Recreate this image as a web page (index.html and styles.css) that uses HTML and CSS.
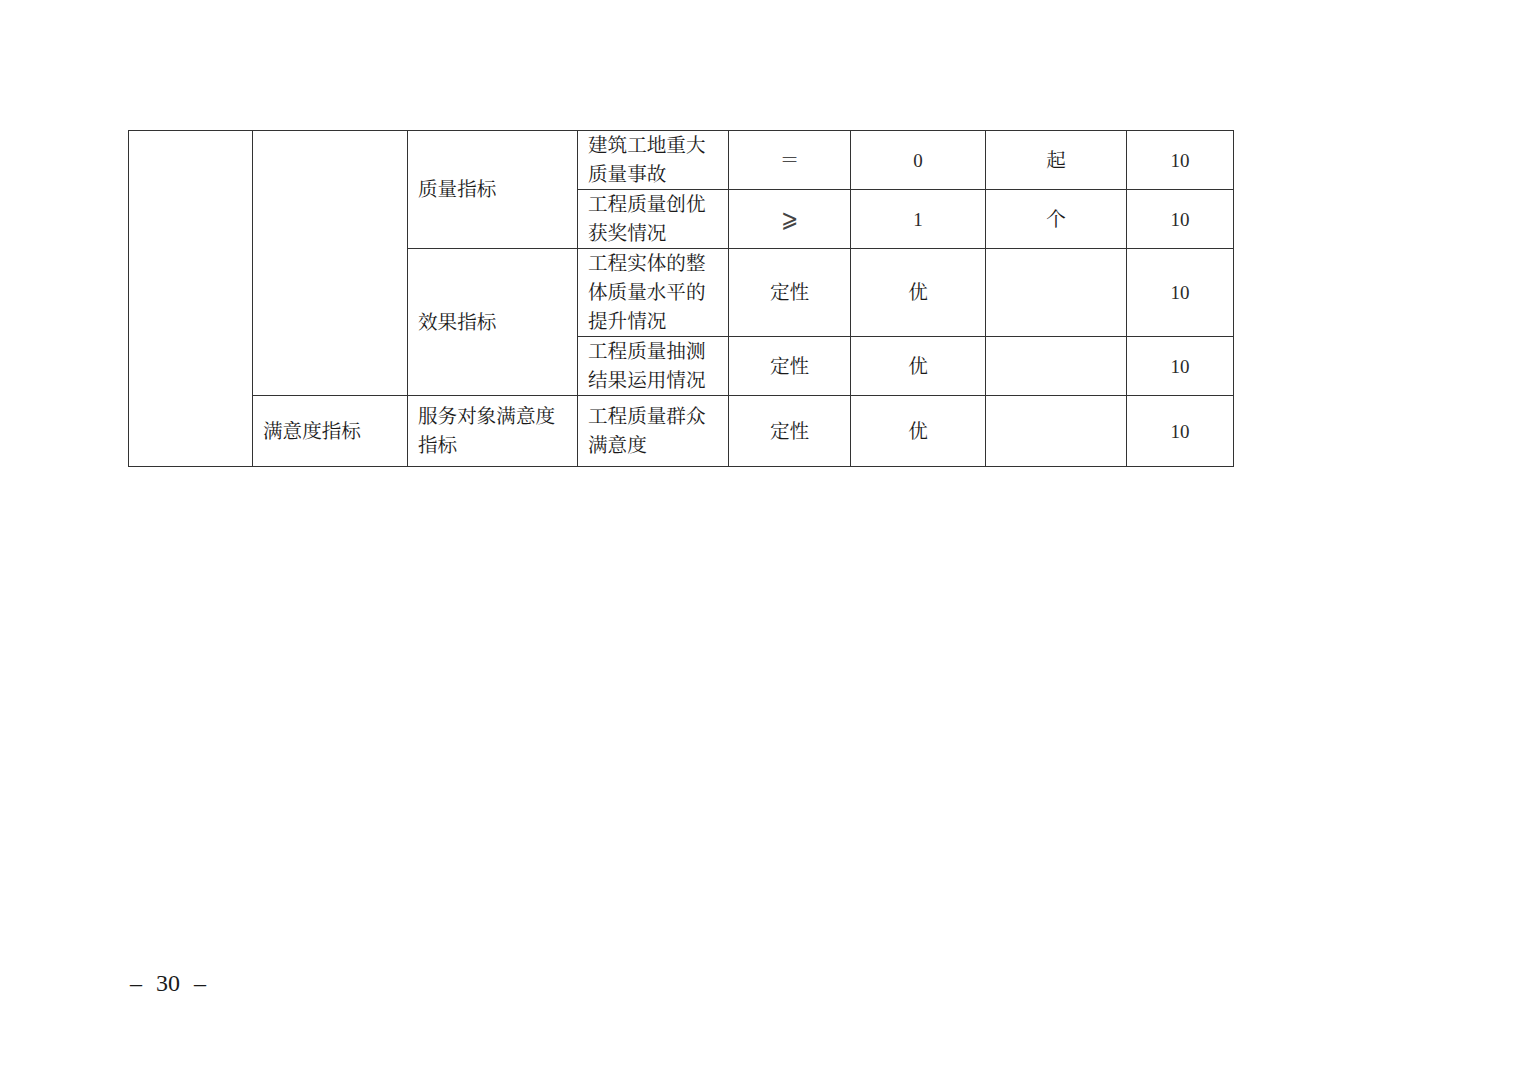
FILE: index.html
```html
<!DOCTYPE html>
<html lang="zh-CN">
<head>
<meta charset="utf-8">
<title>绩效指标表</title>
<link rel="stylesheet" href="styles.css">
</head>
<body>
<div class="page">
  <table class="perf">
    <colgroup>
      <col class="c1"><col class="c2"><col class="c3"><col class="c4">
      <col class="c5"><col class="c6"><col class="c7"><col class="c8">
    </colgroup>
    <tbody>
      <tr class="r2">
        <td rowspan="5"></td>
        <td rowspan="4"></td>
        <td rowspan="2">质量指标</td>
        <td>建筑工地重大质量事故</td>
        <td class="ctr">＝</td>
        <td class="ctr num">0</td>
        <td class="ctr">起</td>
        <td class="ctr num">10</td>
      </tr>
      <tr class="r2">
        <td>工程质量创优获奖情况</td>
        <td class="ctr"><span class="sym">⩾</span></td>
        <td class="ctr num">1</td>
        <td class="ctr">个</td>
        <td class="ctr num">10</td>
      </tr>
      <tr class="r3">
        <td rowspan="2">效果指标</td>
        <td>工程实体的整体质量水平的提升情况</td>
        <td class="ctr">定性</td>
        <td class="ctr">优</td>
        <td></td>
        <td class="ctr num">10</td>
      </tr>
      <tr class="r2">
        <td>工程质量抽测结果运用情况</td>
        <td class="ctr">定性</td>
        <td class="ctr">优</td>
        <td></td>
        <td class="ctr num">10</td>
      </tr>
      <tr class="r5">
        <td>满意度指标</td>
        <td>服务对象满意度指标</td>
        <td>工程质量群众满意度</td>
        <td class="ctr">定性</td>
        <td class="ctr">优</td>
        <td></td>
        <td class="ctr num">10</td>
      </tr>
    </tbody>
  </table>
  <div class="folio"><span class="dash">–</span><span class="pn">30</span><span class="dash">–</span></div>
</div>
</body>
</html>
```
FILE: styles.css
```css
html, body {
  margin: 0;
  padding: 0;
  background: #ffffff;
}
body {
  font-family: "Liberation Serif", "Noto Serif CJK SC", "Noto Sans CJK SC", serif;
  color: #1a1a1a;
}
.page {
  padding: 130px 0 0 128px;
  width: 1392px;
  height: 944px;
}
.perf {
  border-collapse: collapse;
  table-layout: fixed;
  width: 1106px;
  font-size: 19.6px;
  line-height: 29px;
}
.perf td {
  border: 1px solid #333333;
  padding: 0 10px;
  vertical-align: middle;
  text-align: left;
}
.perf td.ctr {
  text-align: center;
  padding: 0;
}
.perf .num {
  font-size: 19px;
  color: #2a2a2a;
}
.perf .sym {
  display: inline-block;
  font-family: "DejaVu Sans", "Liberation Serif", serif;
  font-size: 22px;
  font-weight: 300;
  color: #444444;
  transform: scale(0.95, 1.15);
}
.c1 { width: 124px; }
.c2 { width: 155px; }
.c3 { width: 170px; }
.c4 { width: 151px; }
.c5 { width: 122px; }
.c6 { width: 135px; }
.c7 { width: 141px; }
.c8 { width: 107px; }
.r2 { height: 59px; }
.r3 { height: 88px; }
.r5 { height: 71px; }
.folio {
  margin-top: 501px;
  display: flex;
  align-items: center;
  gap: 14px;
  padding-left: 2px;
  font-size: 24px;
  line-height: 30px;
  color: #1a1a1a;
}
```
